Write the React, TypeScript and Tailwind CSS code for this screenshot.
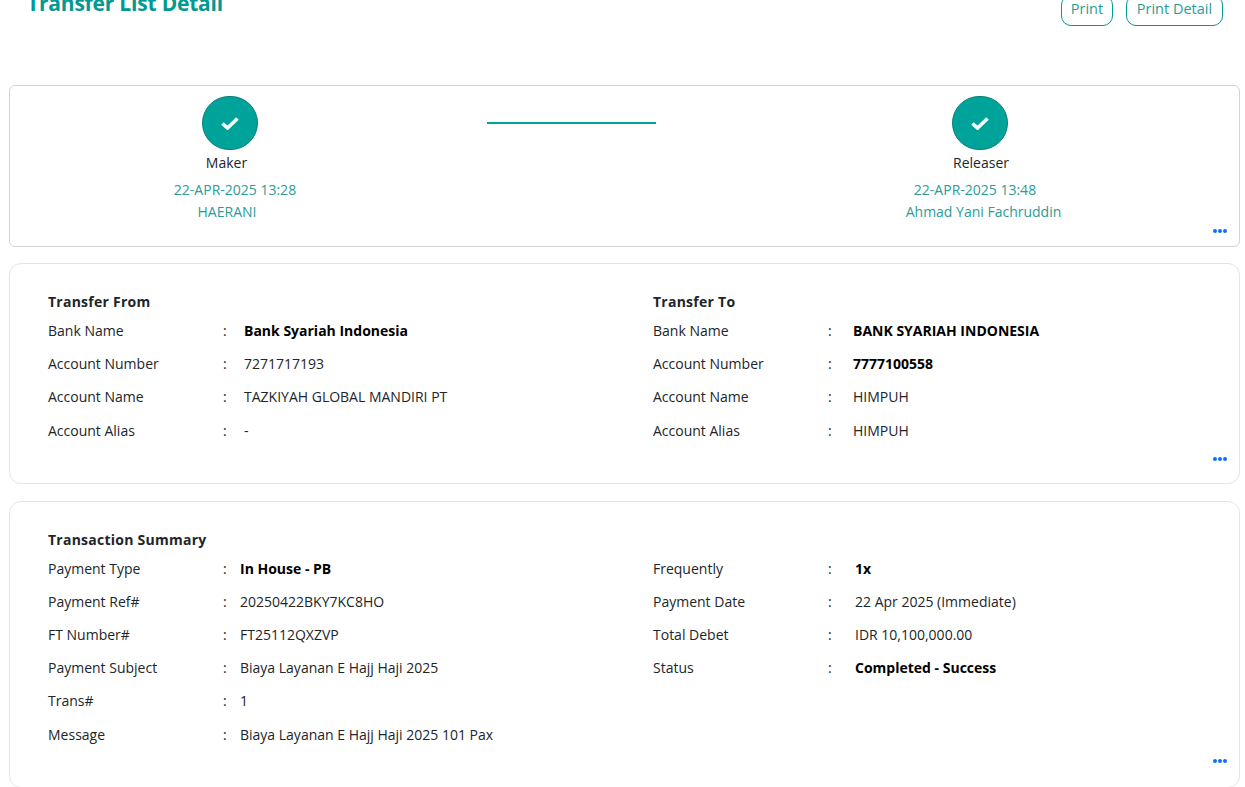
import React from "react";

type Row = { label: string; value: string; bold?: boolean };

const fromRows: Row[] = [
  { label: "Bank Name", value: "Bank Syariah Indonesia", bold: true },
  { label: "Account Number", value: "7271717193" },
  { label: "Account Name", value: "TAZKIYAH GLOBAL MANDIRI PT" },
  { label: "Account Alias", value: "-" },
];

const toRows: Row[] = [
  { label: "Bank Name", value: "BANK SYARIAH INDONESIA", bold: true },
  { label: "Account Number", value: "7777100558", bold: true },
  { label: "Account Name", value: "HIMPUH" },
  { label: "Account Alias", value: "HIMPUH" },
];

const summaryLeft: Row[] = [
  { label: "Payment Type", value: "In House - PB", bold: true },
  { label: "Payment Ref#", value: "20250422BKY7KC8HO" },
  { label: "FT Number#", value: "FT25112QXZVP" },
  { label: "Payment Subject", value: "Biaya Layanan E Hajj Haji 2025" },
  { label: "Trans#", value: "1" },
  { label: "Message", value: "Biaya Layanan E Hajj Haji 2025 101 Pax" },
];

const summaryRight: Row[] = [
  { label: "Frequently", value: "1x", bold: true },
  { label: "Payment Date", value: "22 Apr 2025 (Immediate)" },
  { label: "Total Debet", value: "IDR 10,100,000.00" },
  { label: "Status", value: "Completed - Success", bold: true },
];

const Dots = ({ className }: { className: string }) => (
  <div className={`absolute right-[12px] flex gap-[1px] ${className}`}>
    <span className="w-[4px] h-[4px] rounded-full bg-[#0d6efd]" />
    <span className="w-[4px] h-[4px] rounded-full bg-[#0d6efd]" />
    <span className="w-[4px] h-[4px] rounded-full bg-[#0d6efd]" />
  </div>
);

const CheckCircle = () => (
  <div className="w-[56px] h-[54px] rounded-full bg-[#00a39a] border border-[#0b8079] flex items-center justify-center">
    <svg width="18" height="14" viewBox="0 0 18 14" fill="none">
      <path d="M1.5 7.5L6.5 12L16.5 2.5" stroke="white" strokeWidth="3.6" />
    </svg>
  </div>
);

const RowList = ({ rows, labelW, colonW }: { rows: Row[]; labelW: string; colonW: string }) => (
  <div className="flex flex-col">
    {rows.map((row) => (
      <div key={row.label} className="flex h-[33.2px] items-center text-[#212529]">
        <span className={labelW}>{row.label}</span>
        <span className={colonW}>:</span>
        <span className={row.bold ? "font-bold text-black" : "text-[#212529]"}>{row.value}</span>
      </div>
    ))}
  </div>
);

export default function App() {
  return (
    <div
      className="h-[787px] overflow-hidden bg-white text-[14px]"
      style={{ fontFamily: '"Open Sans", "Noto Sans", sans-serif' }}
    >
      <div className="flex justify-between items-start h-[85px] pl-[27px] pr-[22px]">
        <h1 className="-mt-[12px] text-[21px] leading-[30px] font-bold text-[#009a92] tracking-[-0.2px]">Transfer List Detail</h1>
        <div className="flex gap-[13px] -mt-[5px] text-[14.5px]">
          <button className="h-[31px] w-[52px] pb-[4px] border border-[#009a92] rounded-[10px] text-[#2b9c96]">Print</button>
          <button className="h-[31px] w-[97px] pb-[4px] border border-[#009a92] rounded-[10px] text-[#2b9c96]">Print Detail</button>
        </div>
      </div>

      <div className="pl-[9px] pr-[5px] flex flex-col">
        {/* approval steps */}
        <div className="relative h-[162px] border border-[#d4d4d4] rounded-[6px] flex">
          <div className="w-[440px] flex flex-col items-center pt-[10px]">
            <CheckCircle />
            <span className="mt-[3px] pr-[7px] leading-[20px] text-[#212529]">Maker</span>
            <span className="mt-[7px] pl-[10px] leading-[20px] text-[#2b9c96]">22-APR-2025 13:28</span>
            <span className="mt-[2px] pr-[6px] leading-[20px] text-[#2b9c96]">HAERANI</span>
          </div>
          <div className="ml-[37px] mt-[36px] w-[169px] h-[2px] bg-[#00a39a]" />
          <div className="ml-[104px] w-[440px] flex flex-col items-center pt-[10px]">
            <CheckCircle />
            <span className="mt-[3px] pl-[2px] leading-[20px] text-[#212529]">Releaser</span>
            <span className="mt-[7px] pr-[10px] leading-[20px] text-[#2b9c96]">22-APR-2025 13:48</span>
            <span className="mt-[2px] pl-[7px] leading-[20px] text-[#2b9c96]">Ahmad Yani Fachruddin</span>
          </div>
          <Dots className="bottom-[13px]" />
        </div>

        {/* transfer from / to */}
        <div className="relative mt-[16px] h-[221px] border border-[#e5e5e5] rounded-[12px] pl-[38px] pt-[28px] grid grid-cols-[605px_1fr]">
          <div>
            <h2 className="font-bold text-[#212529] leading-[20px] mb-[2px] tracking-[0.25px]">Transfer From</h2>
            <RowList rows={fromRows} labelW="w-[175px]" colonW="w-[21px]" />
          </div>
          <div>
            <h2 className="font-bold text-[#212529] leading-[20px] mb-[2px] tracking-[0.25px]">Transfer To</h2>
            <RowList rows={toRows} labelW="w-[175px]" colonW="w-[25px]" />
          </div>
          <Dots className="bottom-[22px]" />
        </div>

        {/* summary */}
        <div className="relative mt-[17px] h-[287px] border border-[#e5e5e5] rounded-[12px] pl-[38px] pt-[28px]">
          <h2 className="font-bold text-[#212529] leading-[20px] mb-[1.6px] tracking-[0.25px]">Transaction Summary</h2>
          <div className="grid grid-cols-[605px_1fr]">
            <RowList rows={summaryLeft} labelW="w-[175px]" colonW="w-[17px]" />
            <RowList rows={summaryRight} labelW="w-[175px]" colonW="w-[27px]" />
          </div>
          <Dots className="bottom-[24px]" />
        </div>
      </div>
    </div>
  );
}
